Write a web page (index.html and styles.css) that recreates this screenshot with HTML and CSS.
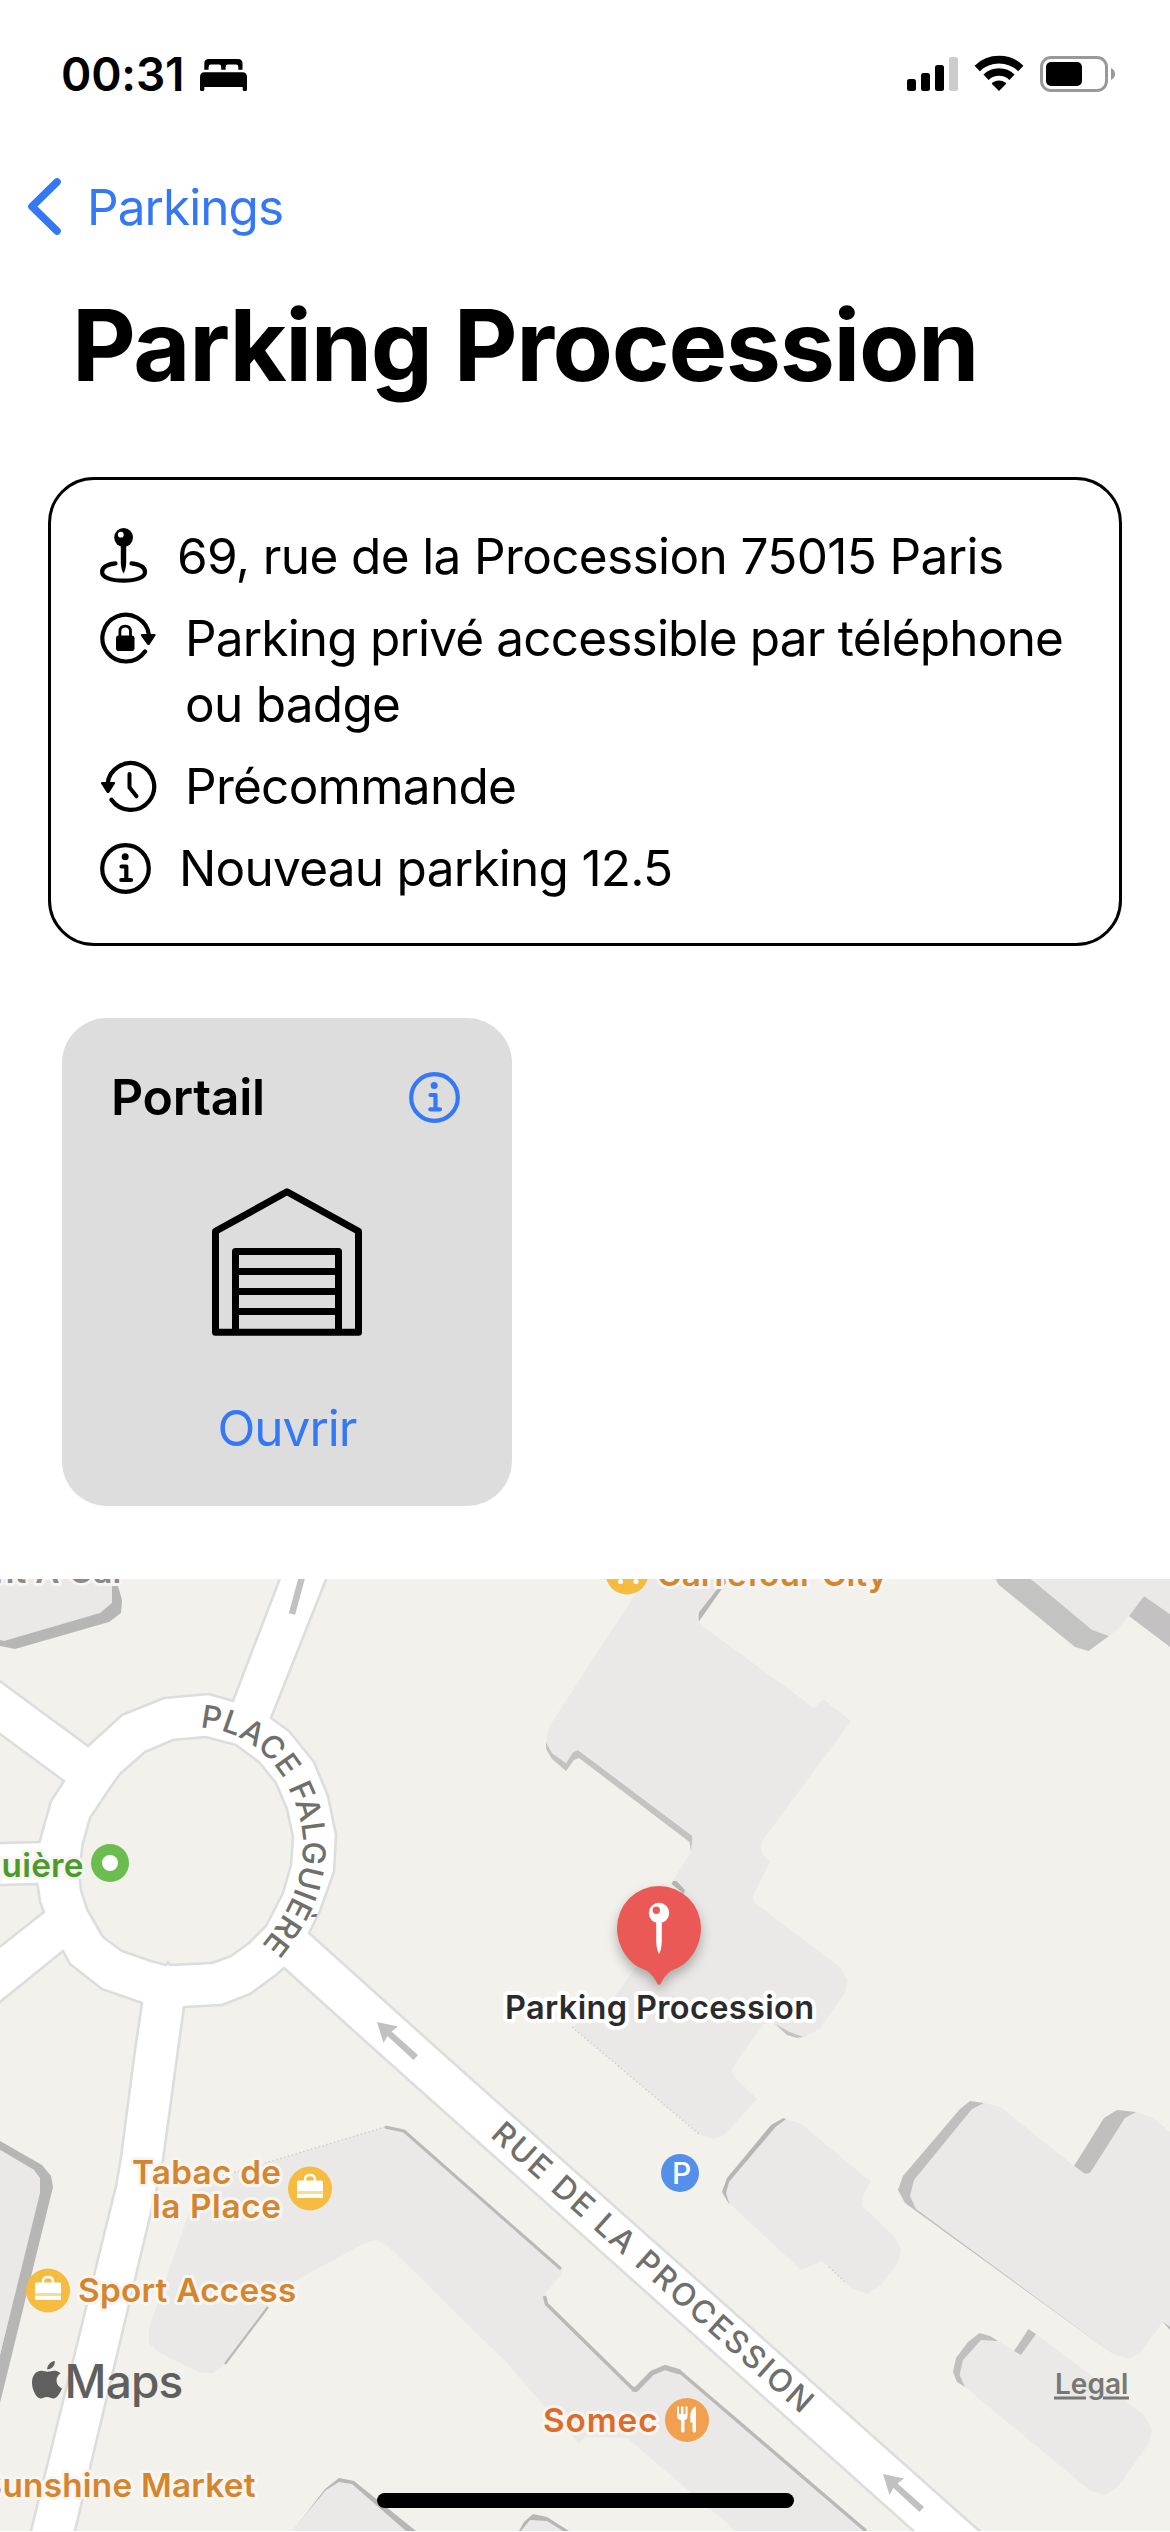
FILE: index.html
```html
<!DOCTYPE html>
<html lang="fr">
<head>
<meta charset="utf-8">
<title>Parking Procession</title>
<link rel="stylesheet" href="styles.css">
</head>
<body>
<main class="screen">
  <header class="status">
    <div class="status-left">
      <span class="time">00:31</span>
      <svg class="bed" viewBox="200 54 48 40" width="48" height="40">
        <path d="M204.300 69.800V63.500Q204.300 59 208.800 59H238Q242.500 59 242.500 63.500V69.800H238.300V67Q238.300 64.600 236 64.600H228Q225.600 64.600 225.600 67V69.800H221.200V67Q221.200 64.600 219 64.600H211Q208.600 64.600 208.600 67V69.800Z"/>
        <path d="M200 77Q200 72.300 204.700 72.300H242.300Q247 72.300 247 77V89.500Q247 91 245.500 91H244.200Q242.700 91 242.700 89.500V87H204.300V89.500Q204.300 91 202.800 91H201.500Q200 91 200 89.500Z"/>
      </svg>
    </div>
    <div class="status-right">
      <svg viewBox="907 54 51 40" width="51" height="40">
        <rect x="907" y="79" width="9" height="12" rx="2.500"/>
        <rect x="921" y="73" width="9" height="18" rx="2.500"/>
        <rect x="935" y="65" width="9" height="26" rx="2.500"/>
        <rect x="949" y="57" width="9" height="34" rx="2.500" fill="#ccc"/>
      </svg>
      <svg viewBox="974 54 50 40" width="50" height="40">
        <g fill="none" stroke="#000" stroke-width="7.600">
          <path d="M977.200 68.400A31.500 31.500 0 0 1 1020.800 68.400"/>
          <path d="M986 77.200A19 19 0 0 1 1012 77.200"/>
        </g>
        <path d="M999 91L992 84Q991.500 83.300 992.200 82.800Q999 78 1005.800 82.800Q1006.500 83.300 1006 84Z"/>
      </svg>
      <svg viewBox="1040 54 76 40" width="76" height="40">
        <rect x="1041.500" y="57.500" width="65" height="33" rx="9.500" fill="none" stroke="#999" stroke-width="3"/>
        <rect x="1046" y="62" width="36" height="24" rx="5"/>
        <path d="M1111 68Q1115 70 1115 74T1111 80Z" fill="#999"/>
      </svg>
    </div>
  </header>

  <nav class="nav">
    <svg viewBox="26 174 38 66" width="38" height="66"><path d="M57 182L32 206.500L57 231" fill="none" stroke="#3478f6" stroke-width="7.600" stroke-linecap="round" stroke-linejoin="round"/></svg>
    <span class="back">Parkings</span>
  </nav>

  <h1 class="title">Parking Procession</h1>

  <section class="info">
    <div class="row">
      <svg viewBox="100 523 49 66" width="49" height="66">
        <g fill="none" stroke="#000" stroke-width="4.200" stroke-linecap="round">
          <path d="M115.500 563.400C106.500 564.500 102.100 568 102.100 572C102.100 577.400 111 580.700 123.500 580.700S145 577.400 145 572C145 568 140.500 564.500 131.500 563.400"/>
        </g>
        <path d="M120.800 544H126.200V562Q126.200 569 123.500 573.500Q120.800 569 120.800 562Z"/>
        <circle cx="123.600" cy="537.500" r="9.400"/><circle cx="120.800" cy="534.700" r="2.900" fill="#fff"/>
      </svg>
      <p class="row-text address">69, rue de la Procession 75015 Paris</p>
    </div>
    <div class="row">
      <svg viewBox="100 605 57 66" width="57" height="66">
        <path d="M149 635A23.400 23.400 0 1 0 145 651.500" fill="none" stroke="#000" stroke-width="4.200" stroke-linecap="round"/>
        <path d="M142 634H154.500Q156.500 634 155.300 635.800L149.800 644.200Q148.400 646 147 644.200L141 635.800Q140 634 142 634Z"/>
        <rect x="116" y="635.500" width="18.500" height="15.500" rx="2.800"/>
        <path d="M119.900 637V631.500Q119.900 626.200 125.200 626.200T130.500 631.500V637" fill="none" stroke="#000" stroke-width="2.800"/>
      </svg>
      <p class="row-text access">Parking privé accessible par téléphone<br><span class="second">ou badge</span></p>
    </div>
    <div class="row">
      <svg viewBox="100 753 57 66" width="57" height="66">
        <path d="M107.500 784A23.400 23.400 0 1 1 111.500 799.800" fill="none" stroke="#000" stroke-width="4.200" stroke-linecap="round"/>
        <path d="M102.500 782H114Q116 782 114.800 783.800L109.500 792.200Q108 794 106.600 792.200L101.200 783.800Q100 782 102.500 782Z"/>
        <path d="M129.500 774V787.500L136.500 796.300" fill="none" stroke="#000" stroke-width="4" stroke-linecap="round" stroke-linejoin="round"/>
      </svg>
      <p class="row-text order">Précommande</p>
    </div>
    <div class="row">
      <svg viewBox="100 835 51 66" width="51" height="66">
        <g fill="none" stroke="#000" stroke-width="4.200" stroke-linecap="round" stroke-linejoin="round">
          <circle cx="125.500" cy="868.500" r="23.300"/><path d="M121.500 866.500H126.300V880M121.300 880H131"/>
        </g>
        <circle cx="125.200" cy="856.700" r="3.500"/>
      </svg>
      <p class="row-text order">Nouveau parking 12.5</p>
    </div>
  </section>

  <section class="gate">
    <div class="gate-head">
      <h2 class="gate-name">Portail</h2>
      <svg viewBox="409 1071 51 51" width="51" height="51">
        <g fill="none" stroke="#3478f6" stroke-width="4.200" stroke-linecap="round" stroke-linejoin="round">
          <circle cx="434.500" cy="1096.500" r="23.300"/><path d="M430.500 1094H435.500V1108.300M430.300 1108.300H440"/>
        </g>
        <circle cx="434.200" cy="1084.500" r="3.500" fill="#3478f6"/>
      </svg>
    </div>
    <svg class="garage" viewBox="212 1188 150 148" width="150" height="148">
      <g fill="none" stroke="#000" stroke-width="7" stroke-linejoin="round">
        <path d="M215.500 1332.300V1231.200L287 1191.800L358.500 1231.200V1332.300Z"/>
        <path d="M235.500 1332V1251.500H338.500V1332M235.500 1271.500H338.500M235.500 1291.500H338.500M235.500 1311.500H338.500"/>
      </g>
    </svg>
    <span class="open">Ouvrir</span>
  </section>

  <svg class="map" viewBox="0 1579 1170 952" width="1170" height="952">
    <defs>
      <path id="place" d="M200 1727.500C235 1730 262 1747 280 1773C294 1796 303.500 1822 303 1846C302 1885 288 1915 255 1953"/>
      <path id="rue" d="M489.500 2136.200L820 2431"/>
      <g id="bag">
        <circle r="22" fill="#f5bc41"/>
        <path d="M-5 -7V-9Q-5 -13.500 0 -13.500T5 -9V-7" fill="none" stroke="#fff" stroke-width="2.400"/>
        <path d="M-13 -6.500Q-13 -8 -11.500 -8H11.500Q13 -8 13 -6.500V3H-13Z M-13 5.500H13V9.500H-13Z" fill="#fff"/>
        <path d="M-13 3H13V5.500H-13Z" fill="#fadb94"/>
      </g>
      <g id="arrow" fill="#c1c1c1">
        <path d="M0 0L21 4.500L14.500 9.500L41 33L36.500 38L10.500 14L6.500 21Z"/>
      </g>
    </defs>
    <rect x="0" y="1579" width="1170" height="952" fill="#f2f1eb"/>

    <!-- roads -->
    <g fill="#fff" stroke="#dcdddd" stroke-width="2.600" stroke-linejoin="round">
      <path d="M280.500 1577L233 1701L209 1694L164 1698L122 1715L88 1746L-3 1679V1732L0 1734L64 1781L51 1801L39.500 1842L-3 1843V1885L37.500 1884L40 1902L44 1912L-3 1949V2004L0 2002L63 1951L70 1964L102 1989L142 2003L135 2050L121 2157L116 2186L30 2535H74L158 2183L163 2160L178 2050L184 2007L222 2005L250 1994L276 1975L284 1968L375 2050L918 2535H983L979.500 2531L439 2050L309 1933L319.500 1912L334 1872L336 1835L328 1796L314 1762L289 1731L271 1718L327 1577Z"/>
      <path fill="#f2f1eb" d="M205.500 1737L173 1740L145 1752L120 1774L110 1788L90 1818L83 1843L79 1870L81 1890L87 1909L103 1937L122 1951L151 1961L166 1965L168 1962L170 1965L212 1963L231 1956L249 1943L266 1926L283 1893L291 1865L293 1837L287 1809L276 1783L259 1762L236 1745Z"/>
    </g>

    <!-- one-way arrows -->
    <path d="M302 1577L292 1614" stroke="#c1c1c1" stroke-width="6.500"/>
    <use href="#arrow" x="377" y="2022"/>
    <use href="#arrow" x="883" y="2474"/>

    <!-- building walls -->
    <g fill="#b6b6b4">
      <path d="M112 1586L118 1586L122 1600L121 1613L109 1622L15 1649L0 1646V1639L100 1611Z"/>
      <path d="M724 1579H726V1583L698.500 1622V1612Z"/>
      <path fill="#c3c3c1" d="M546 1742L552 1753L566 1763L573 1752L578 1750L692.500 1836L694 1846L691 1852L689.500 1842L579 1758L574 1760L566 1771L552 1759L546 1749Z"/>
      <path d="M671.500 1884L673.500 1880L677 1881L685 1890L684 1894Z"/>
      <path fill="#c3c3c1" d="M774 2023L790 2032L804 2037L797 2038L787 2035Z"/>
      <path fill="#c3c3c1" d="M995.500 1579H1031L1093 1629L1109 1636L1088.500 1651L1075 1647L999 1585Z"/>
      <path fill="#c3c1c2" d="M1129 1616L1144 1596L1170 1614V1647Z"/>
      <path d="M0 2141L42 2165L51 2176L53 2187L0 2403V2355L38 2193L34 2170L0 2150Z"/>
      <path fill="#c0bfbd" d="M984 2103L970 2101L960 2109L903 2176L898 2190L905 2203L1113 2354L920 2209L915 2180Z"/>
      <path fill="#c0bfbd" d="M1074 2166L1104 2118L1117 2110L1136 2112L1127 2122L1090 2173L1085 2174Z"/>
      <path d="M786 2119L783.500 2118L771 2125L727 2178L722 2192L729 2204L740 2190Z"/>
      <path fill="#c0bfbd" d="M998 2341L990 2336L979.500 2333L968 2342L956 2358L953 2372L957 2382L965 2387L985 2360Z"/>
      <path d="M339 2478L354 2481L416 2531H400L292 2532L325 2489Z"/>
      <path d="M519 2531L524 2522L533 2514L547 2517L569 2531Z"/>
      <path d="M1163 2322L1165 2320L1170 2325V2330Z"/>
    </g>

    <!-- roofs -->
    <g fill="#eae9e7">
      <path d="M0 1579H112V1603L100 1613L4 1641L0 1640Z"/>
      <path d="M645 1579H724L722 1583L698.500 1613V1623L814 1708L823 1699L851 1721L763 1840L760.500 1847L763 1855L770 1861L752.500 1897L755 1903L841 1968L847 1980L845 1993L819.500 2029L804 2037L790 2032L774 2023L764 2024L744.500 2050L731.500 2070L734.500 2077L757 2099L727 2132Q720 2139 712 2139L699 2134L572 2027L614 1997L636 1967L660 1935L685 1894V1890L677 1881L672.500 1881L691 1852L692.500 1836L578 1750L573 1752L566 1763L552 1753L546 1742L549 1727Z"/>
      <path d="M1031 1579H1170V1614L1144 1596L1119 1628L1109 1636L1092 1630Z"/>
      <path d="M0 2150L34 2170L40 2178V2193L0 2355Z"/>
      <path d="M385 2127L404 2131L561 2268V2274L544 2296L546.500 2305L633 2389L636 2391L652 2374L665 2367L681 2373L864 2531H736L627 2438L579 2444L543 2405L509 2365L388 2246L377 2240L365 2243L293 2282L268 2307L225 2364L213.500 2373H201L158 2352L149 2343V2328L191 2207L197 2190L222 2176Z"/>
      <path d="M292 2531L326 2490L339 2482L352 2484L406 2531Z"/>
      <path d="M521 2531L530 2520L547 2521L563 2531Z"/>
      <path d="M786 2119L801.500 2124L871 2182L863 2195L862 2206L895 2237L901 2250L898 2263L880 2286L867 2294L851 2288L822 2261L801 2270L729 2203L726 2193L729 2182L775.500 2127Z"/>
      <path d="M984 2103L1000.500 2107L1074 2166L1085 2174L1090 2173L1125 2118L1136 2112L1153.600 2118L1170 2132V2327L1163 2322L1140 2353L1129 2359L1113 2354L916 2209L910 2196L914 2180L972 2109Z"/>
      <path d="M998 2341L1014 2351L1021 2355L1036 2334L1144 2415L1152 2430L1149 2443L1118 2487L1105 2495L1090.500 2491L965 2387L959.600 2375L963 2360L981 2340Z"/>
    </g>
    <path d="M585 2437L627 2438L640 2450L625 2441L579 2444Z" fill="#f2f1eb"/>
    <path d="M1014 2351L1028.500 2329L1036 2334L1021 2355Z" fill="#c0bfbd"/>
    <g fill="none" stroke="#b9b9b7" stroke-linejoin="round">
      <path d="M385 2127L404 2131L561 2269" stroke-width="3"/>
      <path d="M544.500 2296L546.500 2304L633 2389" stroke-width="3.500"/>
      <path d="M632 2389L636 2389.500L652 2373L665 2367.500L680 2372" stroke-width="5"/>
      <path d="M679 2371L866 2531" stroke-width="3.500"/>
      <path d="M268 2307L225 2364" stroke-width="2.200"/>
      <path d="M385 2127L222 2176M572 2027L699 2134M829 2267L845 2282" stroke-width="1.500" stroke-dasharray="1.500 2.500" stroke="#cfcfcc"/>
    </g>

    <!-- street names -->
    <g class="street">
      <text class="street-place"><textPath href="#place">PLACE FALGUIÈRE</textPath></text>
      <text class="street-rue"><textPath href="#rue">RUE DE LA PROCESSION</textPath></text>
    </g>

    <!-- points of interest -->
    <g class="poi">
      <text x="-19.500" y="1877" class="station">guière</text>
      <text x="-6" y="1583" class="plain">nt A Car</text>
      <text x="657" y="1586" class="carrefour">Carrefour City</text>
      <text x="132" y="2184">Tabac de</text>
      <text x="152" y="2218" class="place">la Place</text>
      <text x="78" y="2302">Sport Access</text>
      <text x="-19.500" y="2497">Sunshine Market</text>
      <text x="543" y="2432" class="food">Somec</text>
    </g>
    <circle cx="110" cy="1863" r="19" fill="#6bbd4f"/><circle cx="110" cy="1863" r="8" fill="#fff"/>
    <g><circle cx="627" cy="1573" r="21.500" fill="#f5bc41"/><circle cx="620.500" cy="1581.500" r="2.500" fill="#fff"/><circle cx="636" cy="1581.500" r="2.500" fill="#fff"/></g>
    <use href="#bag" x="310" y="2188.500"/>
    <use href="#bag" x="48" y="2290.500"/>
    <circle cx="680" cy="2173" r="19" fill="#5490ea"/>
    <text x="681.500" y="2183.500" class="p-sign">P</text>
    <circle cx="687" cy="2420" r="22" fill="#f1a04f"/>
    <g fill="#fff">
      <path d="M677 2406.500H679V2414H681V2406.500H683.500V2414H685.500V2406.500H687.500V2416Q687.500 2419.500 684.500 2420.300V2431Q684.500 2432.500 682.700 2432.500T681 2431V2420.300Q677 2419.500 677 2416Z"/>
      <path d="M696 2407V2431Q696 2432.500 694.300 2432.500T692.500 2431V2422.500H690.300V2417Q690.300 2408 696 2406.500Z"/>
    </g>

    <!-- destination marker -->
    <path class="marker" d="M659 1886A42 42 0 0 0 617 1928C617 1945 627 1963 643 1969Q651 1972 655.500 1980.500Q658 1985 659 1985T662.500 1980.500Q667 1972 675 1969C691 1963 701 1945 701 1928A42 42 0 0 0 659 1886Z" fill="#eb5957"/>
    <circle cx="659" cy="1913" r="10.200" fill="#fff"/><circle cx="656.300" cy="1910.200" r="3.700" fill="#eb5957"/>
    <path d="M656.200 1922H661.800V1941Q661.500 1950 659 1954Q656.500 1950 656.200 1941Z" fill="#fff"/>
    <text x="505" y="2019" class="dest">Parking Procession</text>

    <!-- attribution -->
    <g fill="#5f5f5d">
      <path d="M48.300 2371.500C51 2371.500 55.500 2368.800 60.500 2373.300C54.500 2377.500 55.500 2385.500 62 2388.500C59.500 2394.500 56.500 2398.500 53.500 2398.500C51 2398.500 50 2397 47 2397S43 2398.500 40.500 2398.500C36.500 2398.500 32 2390 32 2382.500C32 2374.500 37 2370.800 41.500 2370.800C44.500 2370.800 46.500 2372.200 48.300 2371.500Z"/>
      <path d="M47.200 2369.500C46.800 2365.500 50.500 2361.500 54.800 2361C55.300 2365.500 51.500 2369.500 47.200 2369.500Z"/>
      <text x="64.500" y="2398" class="maps">Maps</text>
    </g>
    <text x="1055" y="2394" class="legal">Legal</text>
    <path d="M1054 2398H1086M1103 2398H1129" stroke="#777773" stroke-width="3"/>

    <rect x="377" y="2493" width="417" height="15" rx="7.500"/>
  </svg>
</main>
</body>
</html>
```
FILE: styles.css
```css
body {
  margin: 0;
  background: #fff;
  color: #000;
  font-family: Inter, "Liberation Sans", sans-serif;
}

.screen {
  display: flex;
  flex-direction: column;
  width: 1170px;
  height: 2532px;
  overflow: hidden;
}

svg {
  display: block;
  flex: none;
}

.status {
  display: flex;
  justify-content: space-between;
  align-items: center;
  height: 60px;
  padding: 44px 54px 0 61px;
}

.status-left {
  display: flex;
  align-items: center;
  gap: 16px;
}

.status-right {
  display: flex;
  gap: 16px;
}

.time {
  font-size: 46px;
  font-weight: 600;
  line-height: 60px;
  letter-spacing: -0.16px;
}

.nav {
  display: flex;
  gap: 23px;
  height: 66px;
  margin-top: 70px;
  padding-left: 26px;
}

.back {
  color: #3478f6;
  font-size: 49.5px;
  line-height: 66px;
  letter-spacing: -0.94px;
}

.title {
  margin: 45px 0 0 72px;
  font-size: 98.6px;
  font-weight: 700;
  line-height: 120px;
  letter-spacing: -1.35px;
}

.info {
  display: flex;
  flex-direction: column;
  gap: 16px;
  box-sizing: border-box;
  width: 1074px;
  height: 469px;
  margin: 72px 48px 0;
  padding: 43px 0 0 49px;
  border: 3px solid #000;
  border-radius: 46px;
}

.row {
  display: flex;
  gap: 28px;
}

.row-text {
  margin: 0;
  font-size: 49.5px;
  line-height: 66px;
  white-space: nowrap;
}

.address { letter-spacing: -0.63px; }
.access { letter-spacing: -0.82px; }
.second,
.order { letter-spacing: -0.73px; }

.gate {
  display: flex;
  flex-direction: column;
  align-items: center;
  box-sizing: border-box;
  width: 450px;
  height: 488px;
  margin: 72px 0 73px 62px;
  padding-top: 49px;
  border-radius: 45px;
  background: #ddd;
}

.gate-head {
  display: flex;
  justify-content: space-between;
  align-items: center;
  align-self: stretch;
  height: 60px;
  padding: 0 52px 0 49px;
}

.gate-name {
  margin: 0;
  font-size: 50px;
  font-weight: 600;
  line-height: 60px;
  letter-spacing: -0.3px;
}

.garage { margin-top: 61px; }

.open {
  margin-top: 59px;
  color: #3478f6;
  font-size: 49.5px;
  line-height: 66px;
  letter-spacing: -1px;
}

.street {
  fill: #6f6f6b;
  font-size: 31.5px;
  font-weight: 450;
}

.street-place { letter-spacing: 0.3px; }
.street-rue { letter-spacing: 2.3px; }

.poi {
  fill: #d6852f;
  font-size: 33.3px;
  font-weight: 600;
  letter-spacing: 0.25px;
  stroke: #f8f6f2;
  stroke-width: 6px;
  stroke-linejoin: round;
  paint-order: stroke;
}

.station { fill: #4b9b2c; }
.plain { fill: #8a8a88; }
.carrefour { letter-spacing: 0.1px; }
.place { letter-spacing: 0.6px; }
.food { fill: #dd6b2a; letter-spacing: 0.9px; }

.p-sign {
  fill: #fff;
  font-size: 30px;
  font-weight: 500;
  text-anchor: middle;
}

.marker { filter: drop-shadow(0 6px 6px rgba(0, 0, 0, 0.28)); }

.dest {
  fill: #2b2b2d;
  font-size: 32.5px;
  font-weight: 600;
  letter-spacing: 0.35px;
  stroke: #fff;
  stroke-width: 8px;
  stroke-linejoin: round;
  paint-order: stroke;
}

.maps {
  font-size: 46px;
  font-weight: 500;
  letter-spacing: -0.85px;
}

.legal {
  fill: #777773;
  font-size: 28px;
  font-weight: 600;
}
```
